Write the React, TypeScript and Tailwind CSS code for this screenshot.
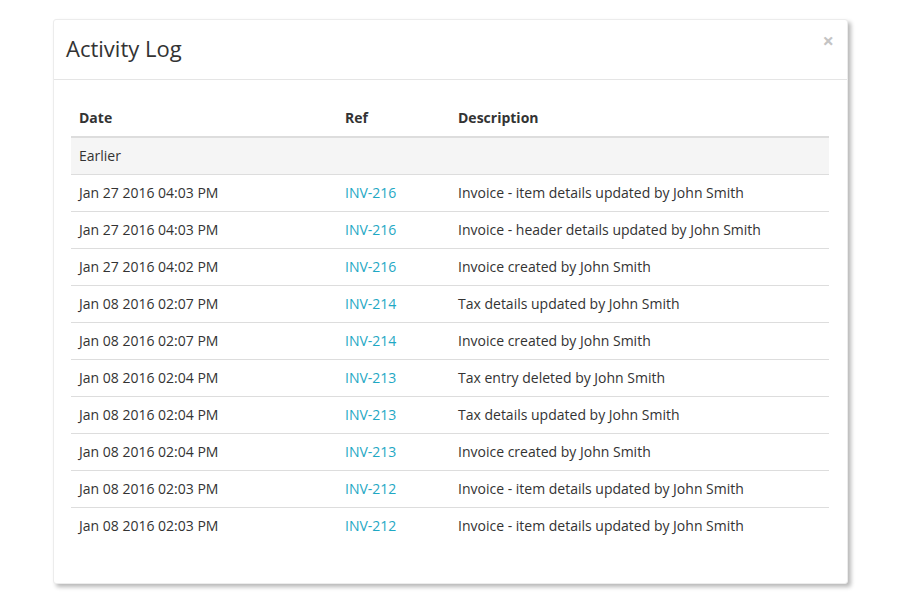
const rows = [
  { date: "Jan 27 2016 04:03 PM", ref: "INV-216", desc: "Invoice - item details updated by John Smith" },
  { date: "Jan 27 2016 04:03 PM", ref: "INV-216", desc: "Invoice - header details updated by John Smith" },
  { date: "Jan 27 2016 04:02 PM", ref: "INV-216", desc: "Invoice created by John Smith" },
  { date: "Jan 08 2016 02:07 PM", ref: "INV-214", desc: "Tax details updated by John Smith" },
  { date: "Jan 08 2016 02:07 PM", ref: "INV-214", desc: "Invoice created by John Smith" },
  { date: "Jan 08 2016 02:04 PM", ref: "INV-213", desc: "Tax entry deleted by John Smith" },
  { date: "Jan 08 2016 02:04 PM", ref: "INV-213", desc: "Tax details updated by John Smith" },
  { date: "Jan 08 2016 02:04 PM", ref: "INV-213", desc: "Invoice created by John Smith" },
  { date: "Jan 08 2016 02:03 PM", ref: "INV-212", desc: "Invoice - item details updated by John Smith" },
  { date: "Jan 08 2016 02:03 PM", ref: "INV-212", desc: "Invoice - item details updated by John Smith" }
];

export default function App() {
  return (
    <div className="min-h-[600px] bg-white pt-[19px] pl-[53px] font-['Open_Sans',sans-serif] text-[#333]">
      <div className="w-[795px] rounded-[3px] border border-[#ececec] bg-white shadow-[3px_3px_4px_rgba(0,0,0,0.28)]">
        <div className="flex items-start justify-between border-b border-[#e5e5e5] pl-[12px] pr-[13px] pt-[12px] pb-[15px]">
          <h4 className="text-[22px] leading-[32px] text-[#333]">Activity Log</h4>
          <button type="button" className="-mt-[1px] text-[20px] font-bold leading-none text-[#c4c4c4]">
            ×
          </button>
        </div>
        <div className="pl-[17px] pr-[18px] pt-[20px] pb-[39px]">
          <table className="w-full border-collapse text-[14px] leading-[20px]">
            <thead>
              <tr className="border-b-2 border-[#ddd]">
                <th className="w-[266px] px-[8px] py-[8px] text-left font-bold">Date</th>
                <th className="w-[113px] px-[8px] py-[8px] text-left font-bold">Ref</th>
                <th className="px-[8px] py-[8px] text-left font-bold">Description</th>
              </tr>
            </thead>
            <tbody>
              <tr className="bg-[#f5f5f5]">
                <td colSpan={3} className="px-[8px] py-[8px]">Earlier</td>
              </tr>
              {rows.map((row, i) => (
                <tr key={i} className="border-t border-[#ddd]">
                  <td className="px-[8px] py-[8px]">{row.date}</td>
                  <td className="px-[8px] py-[8px]">
                    <a href="#" className="text-[#1fa8c4]">{row.ref}</a>
                  </td>
                  <td className="px-[8px] py-[8px]">{row.desc}</td>
                </tr>
              ))}
            </tbody>
          </table>
        </div>
      </div>
    </div>
  );
}
